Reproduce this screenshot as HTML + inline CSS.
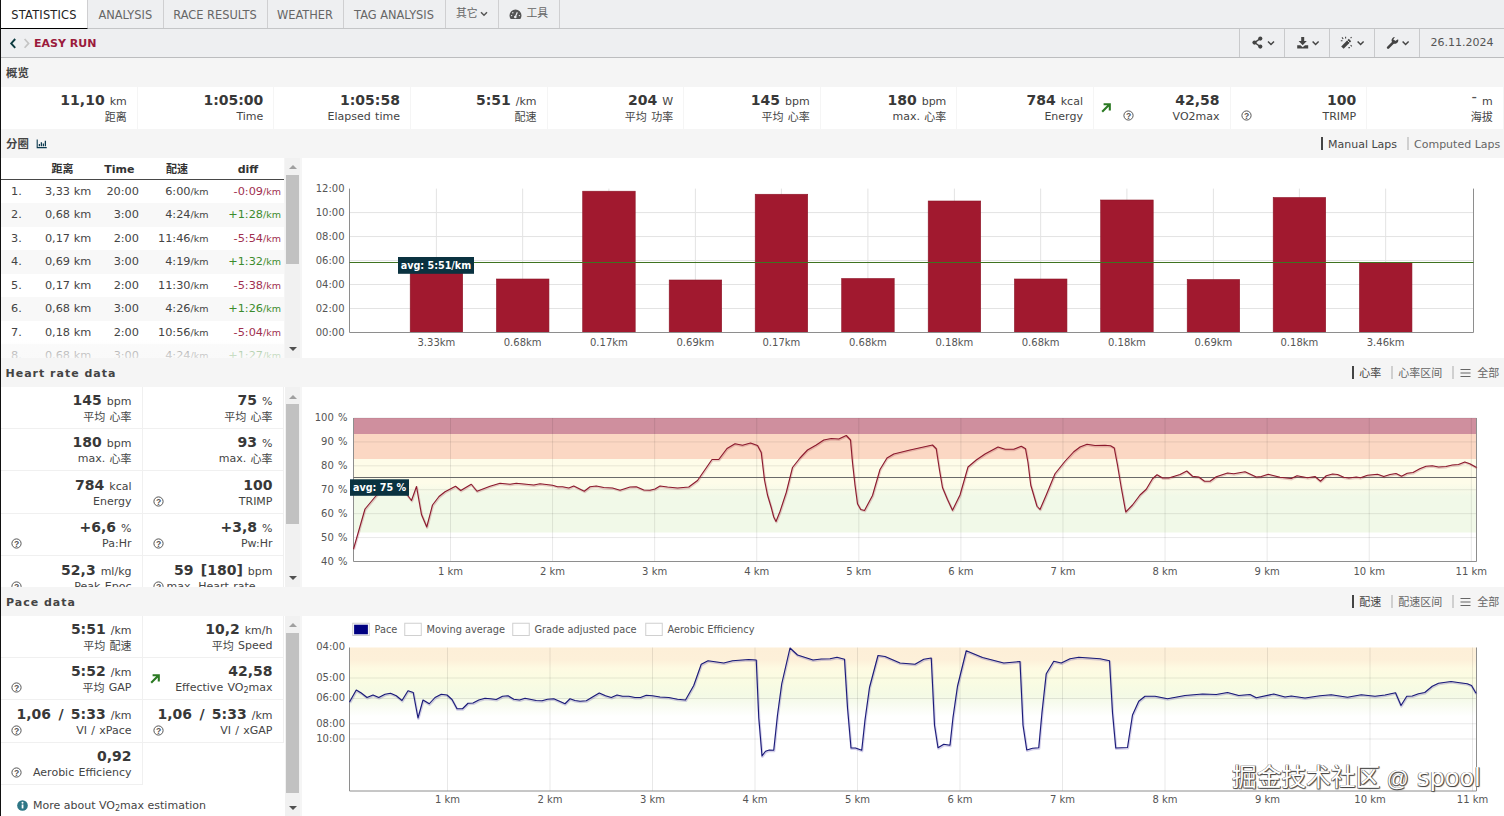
<!DOCTYPE html><html lang="zh"><head><meta charset="utf-8"><title>Easy Run</title><style>
*{box-sizing:border-box;margin:0;padding:0}
html,body{width:1504px;height:816px;overflow:hidden}
body{position:relative;background:#f5f5f5;font-family:"DejaVu Sans","Liberation Sans","Noto Sans CJK SC",sans-serif;font-size:11px;color:#3c3c3c;line-height:1}
.abs{position:absolute}
#lb{left:0;top:0;width:1px;height:816px;background:#111}
#tabs{left:1px;top:0;width:1503px;height:29px;background:#eeeff1;border-bottom:1px solid #c4c5c7}
.tab{position:absolute;top:0;height:28px;border-right:1px solid #cfcfd1;color:#666;font-size:11.4px;line-height:30px;text-align:center;white-space:nowrap}
.tab.act{background:#fff;color:#222;letter-spacing:0.2px;height:29px;border-bottom:1px solid #000;border-right:1px solid #cfcfd1}
#hdr{left:1px;top:29px;width:1503px;height:29px;background:#eeeff1;border-bottom:1px solid #bcbdbf}
.hb{position:absolute;top:0;height:28px;border-left:1px solid #c9cacc}
.st{position:absolute;left:5px;font-weight:bold;color:#444;white-space:nowrap}
.box{position:absolute;background:#fff;text-align:right;white-space:nowrap;padding-right:11px}
.box .v{display:block;font-size:14px;font-weight:bold;color:#383838;height:15px;line-height:15px;word-spacing:2.5px}
.box .v small{font-size:11px;font-weight:normal;color:#444;margin-left:5px}
.box .l{display:block;font-size:11px;color:#444;height:15px;line-height:17px;word-spacing:0.8px}
.cj{position:relative;top:1px}
.hp{position:absolute;width:11px;height:11px}
.panel{position:absolute;background:#fff;overflow:hidden}
.sb{position:absolute;left:285px;width:14.5px;background:#f1f1f1}
.sb i{position:absolute;left:1.3px;width:12.9px;background:#c1c1c1}
.sb b{position:absolute;left:3.5px;width:0;height:0;border-left:4px solid transparent;border-right:4px solid transparent}
.sb b.u{border-bottom:4px solid #a0a0a0}
.sb b.d{border-top:4px solid #505050}
.thead{position:absolute;left:0;top:0;width:283px;height:22px;border-bottom:1px solid #484848;font-weight:bold;color:#333;font-size:11px}
.thead span{position:absolute;top:0;line-height:23.5px}
.tr{position:absolute;left:0;width:283.5px;height:23.46px;font-size:11.3px;color:#444;white-space:nowrap}
.tr.e{background:#f8f8f8}
.tr span{position:absolute;top:0;line-height:23.2px}
.tr small{font-size:9.5px}
.tr .n{color:#a0304f}
.tr .p{color:#3c8b2c}
.lnk{position:absolute;white-space:nowrap;font-size:11px;color:#444}
.lnk.off{color:#666}
.vb{position:absolute;width:2px;height:13px;background:#444}
.vb.off{background:#d0d0d0}
svg text{font-family:"DejaVu Sans","Liberation Sans","Noto Sans CJK SC",sans-serif}
</style></head><body>
<div id="lb" class="abs"></div>
<div id="tabs" class="abs">
<div class="tab act" style="left:0px;width:87px">STATISTICS</div>
<div class="tab" style="left:87px;width:75.5px">ANALYSIS</div>
<div class="tab" style="left:162.5px;width:104px">RACE RESULTS</div>
<div class="tab" style="left:266.5px;width:76px">WEATHER</div>
<div class="tab" style="left:342.5px;width:102px">TAG ANALYSIS</div>
<div class="tab" style="left:444.5px;width:53px;text-align:left;padding-left:10.5px;font-size:10.8px;line-height:28px">其它<svg style="position:absolute;left:34.8px;top:11px" width="8" height="6" viewBox="0 0 8 6"><path d="M1 1.2 L4 4.2 L7 1.2" fill="none" stroke="#555" stroke-width="1.5"/></svg></div>
<div class="tab" style="left:497.5px;width:61px;text-align:left;padding-left:28px;font-size:10.8px;line-height:28px">工具<svg style="position:absolute;left:10.5px;top:8.5px" width="13" height="11" viewBox="0 0 13 11"><path d="M6.5 0.5 A6 6 0 0 0 0.5 6.5 A6 6 0 0 0 1.6 10 L11.4 10 A6 6 0 0 0 12.5 6.5 A6 6 0 0 0 6.5 0.5 Z" fill="#555"/><path d="M6.3 8 L8.3 3.2" stroke="#eeeff1" stroke-width="1.2"/><circle cx="6.3" cy="8" r="1.3" fill="#eeeff1"/><circle cx="2.6" cy="6.6" r="0.7" fill="#eeeff1"/><circle cx="3.8" cy="3.8" r="0.7" fill="#eeeff1"/><circle cx="10.4" cy="6.6" r="0.7" fill="#eeeff1"/></svg></div>
</div>
<div id="hdr" class="abs">
<svg class="abs" style="left:8px;top:8.5px" width="24" height="11" viewBox="0 0 24 11"><path d="M6.2 1 L2.2 5.4 L6.2 9.8" fill="none" stroke="#0d3b40" stroke-width="1.9"/><path d="M15.6 1 L19.6 5.4 L15.6 9.8" fill="none" stroke="#c4c4c4" stroke-width="1.7"/></svg>
<div class="abs" style="left:33px;top:0;line-height:29.5px;font-weight:bold;font-size:11px;color:#9b1b3c;white-space:nowrap">EASY RUN</div>
<div class="hb" style="left:1237.5px;width:45px"><svg width="44" height="28" viewBox="0 0 44 28"><circle cx="20.3" cy="9.6" r="2.1" fill="#444"/><circle cx="14.5" cy="13.6" r="2.1" fill="#444"/><circle cx="20.3" cy="17.6" r="2.1" fill="#444"/><path d="M20.3 9.6 L14.5 13.6 L20.3 17.6" fill="none" stroke="#444" stroke-width="1.3"/><path d="M28 12.5 l3 3 l3 -3" fill="none" stroke="#444" stroke-width="1.5"/></svg></div>
<div class="hb" style="left:1282.5px;width:45px"><svg width="44" height="28" viewBox="0 0 44 28"><path d="M16.2 8 h3 v4 h2.6 l-4.1 4.2 l-4.1 -4.2 h2.6 z" fill="#444"/><path d="M12.2 16.3 h3.2 l2.3 2 l2.3 -2 h3.2 v3.2 h-11 z" fill="#444"/><path d="M27.6 12.5 l3 3 l3 -3" fill="none" stroke="#444" stroke-width="1.5"/></svg></div>
<div class="hb" style="left:1327.5px;width:45px"><svg width="44" height="28" viewBox="0 0 44 28"><path d="M11.2 17.4 L18.8 9.8 L21.2 12.2 L13.6 19.8 Z" fill="#444"/><path d="M17.3 11.3 l2.4 2.4" stroke="#eeeff1" stroke-width="0.9"/><path d="M12 8.4 l1.2 1.6 M15.6 7.8 v1.7 M10.8 11.8 h1.7 M20.6 16.2 l1.2 1.2 M18.4 18.6 h1.5 M21.6 8.2 l-1 1" stroke="#444" stroke-width="1.1"/><path d="M27.6 12.5 l3 3 l3 -3" fill="none" stroke="#444" stroke-width="1.5"/></svg></div>
<div class="hb" style="left:1372.5px;width:45px"><svg width="44" height="28" viewBox="0 0 44 28"><path d="M13.1 18.6 L19.1 12.6" stroke="#444" stroke-width="2.6" stroke-linecap="round"/><path d="M23.1 10.2 a3.4 3.4 0 1 1 -3.2 -2.2 l-1.6 2.4 l1.8 1.6 z" fill="#444"/><path d="M27.6 12.5 l3 3 l3 -3" fill="none" stroke="#444" stroke-width="1.5"/></svg></div>
<div class="hb" style="left:1417.5px;width:85.5px;line-height:28px;padding-left:11px;color:#555;white-space:nowrap">26.11.2024</div>
</div>
<div class="st" style="top:68px;left:6px;font-size:11.4px">概览</div>
<div class="box" style="left:1.15px;top:86.5px;width:135.60px;height:42px;padding-top:6.5px;padding-right:10px"><span class="v">11,10<small>km</small></span><span class="l"><span class="cj">距离</span></span></div>
<div class="box" style="left:137.75px;top:86.5px;width:135.60px;height:42px;padding-top:6.5px;padding-right:10px"><span class="v">1:05:00</span><span class="l">Time</span></div>
<div class="box" style="left:274.35px;top:86.5px;width:135.60px;height:42px;padding-top:6.5px;padding-right:10px"><span class="v">1:05:58</span><span class="l">Elapsed time</span></div>
<div class="box" style="left:410.95px;top:86.5px;width:135.60px;height:42px;padding-top:6.5px;padding-right:10px"><span class="v">5:51<small>/km</small></span><span class="l"><span class="cj">配速</span></span></div>
<div class="box" style="left:547.55px;top:86.5px;width:135.60px;height:42px;padding-top:6.5px;padding-right:10px"><span class="v">204<small>W</small></span><span class="l"><span class="cj">平均</span> <span class="cj">功率</span></span></div>
<div class="box" style="left:684.15px;top:86.5px;width:135.60px;height:42px;padding-top:6.5px;padding-right:10px"><span class="v">145<small>bpm</small></span><span class="l"><span class="cj">平均</span> <span class="cj">心率</span></span></div>
<div class="box" style="left:820.75px;top:86.5px;width:135.60px;height:42px;padding-top:6.5px;padding-right:10px"><span class="v">180<small>bpm</small></span><span class="l">max. <span class="cj">心率</span></span></div>
<div class="box" style="left:957.35px;top:86.5px;width:135.60px;height:42px;padding-top:6.5px;padding-right:10px"><span class="v">784<small>kcal</small></span><span class="l">Energy</span></div>
<div class="box" style="left:1093.95px;top:86.5px;width:135.60px;height:42px;padding-top:6.5px;padding-right:10px"><svg class="abs" style="left:7px;top:16px" width="10" height="10" viewBox="0 0 10 10"><path d="M1.2 8.8 L8.4 1.6 M2.6 1.2 H8.8 V7.4" fill="none" stroke="#2b7a23" stroke-width="2.1"/></svg><svg class="hp" style="left:29px;top:23.5px" viewBox="0 0 11 11"><circle cx="5.5" cy="5.5" r="4.6" fill="none" stroke="#555" stroke-width="1"/><text x="5.6" y="8.5" font-size="8.6" font-weight="bold" text-anchor="middle" fill="#555" style="font-family:&quot;Liberation Sans&quot;,sans-serif">?</text></svg><span class="v">42,58</span><span class="l">VO2max</span></div>
<div class="box" style="left:1230.55px;top:86.5px;width:135.60px;height:42px;padding-top:6.5px;padding-right:10px"><svg class="hp" style="left:10.5px;top:23.5px" viewBox="0 0 11 11"><circle cx="5.5" cy="5.5" r="4.6" fill="none" stroke="#555" stroke-width="1"/><text x="5.6" y="8.5" font-size="8.6" font-weight="bold" text-anchor="middle" fill="#555" style="font-family:&quot;Liberation Sans&quot;,sans-serif">?</text></svg><span class="v">100</span><span class="l">TRIMP</span></div>
<div class="box" style="left:1367.15px;top:86.5px;width:135.60px;height:42px;padding-top:6.5px;padding-right:10px"><span class="v"><span style="font-weight:normal;font-size:15px;color:#555;position:relative;top:-3.5px;line-height:0">-</span><small>m</small></span><span class="l"><span class="cj">海拔</span></span></div>
<div class="st" style="top:139px;left:6px;font-size:11.4px">分圈</div>
<svg class="abs" style="left:35.5px;top:139.3px" width="11.5" height="10" viewBox="0 0 12 11"><path d="M1 0.5 V9.5 H11.5" fill="none" stroke="#0d3b50" stroke-width="1.2"/><path d="M3.4 8 V5.5 M5.6 8 V3.5 M7.8 8 V5 M10 8 V2" stroke="#0d3b50" stroke-width="1.4"/></svg>
<div class="vb" style="left:1320.8px;top:137px"></div><div class="lnk" style="left:1328px;top:138.5px">Manual Laps</div>
<div class="vb off" style="left:1406.5px;top:137px"></div><div class="lnk off" style="left:1414px;top:138.5px">Computed Laps</div>
<div class="panel" style="left:1px;top:158px;width:283px;height:199.5px">
<div class="thead"><span style="left:37px;width:49px;text-align:center">距离</span><span style="left:99px;width:38.5px;text-align:center">Time</span><span style="left:150px;width:52px;text-align:center">配速</span><span style="left:222px;width:50px;text-align:center">diff</span></div>
<div class="tr" style="top:22.00px"><span style="left:10px">1.</span><span style="right:193.3px">3,33 km</span><span style="right:145.5px">20:00</span><span style="right:76px">6:00<small>/km</small></span><span class="n" style="right:3.5px">-0:09<small>/km</small></span></div>
<div class="tr e" style="top:45.46px"><span style="left:10px">2.</span><span style="right:193.3px">0,68 km</span><span style="right:145.5px">3:00</span><span style="right:76px">4:24<small>/km</small></span><span class="p" style="right:3.5px">+1:28<small>/km</small></span></div>
<div class="tr" style="top:68.92px"><span style="left:10px">3.</span><span style="right:193.3px">0,17 km</span><span style="right:145.5px">2:00</span><span style="right:76px">11:46<small>/km</small></span><span class="n" style="right:3.5px">-5:54<small>/km</small></span></div>
<div class="tr e" style="top:92.38px"><span style="left:10px">4.</span><span style="right:193.3px">0,69 km</span><span style="right:145.5px">3:00</span><span style="right:76px">4:19<small>/km</small></span><span class="p" style="right:3.5px">+1:32<small>/km</small></span></div>
<div class="tr" style="top:115.84px"><span style="left:10px">5.</span><span style="right:193.3px">0,17 km</span><span style="right:145.5px">2:00</span><span style="right:76px">11:30<small>/km</small></span><span class="n" style="right:3.5px">-5:38<small>/km</small></span></div>
<div class="tr e" style="top:139.30px"><span style="left:10px">6.</span><span style="right:193.3px">0,68 km</span><span style="right:145.5px">3:00</span><span style="right:76px">4:26<small>/km</small></span><span class="p" style="right:3.5px">+1:26<small>/km</small></span></div>
<div class="tr" style="top:162.76px"><span style="left:10px">7.</span><span style="right:193.3px">0,18 km</span><span style="right:145.5px">2:00</span><span style="right:76px">10:56<small>/km</small></span><span class="n" style="right:3.5px">-5:04<small>/km</small></span></div>
<div class="tr e" style="top:186.22px"><span style="left:10px">8.</span><span style="right:193.3px">0,68 km</span><span style="right:145.5px">3:00</span><span style="right:76px">4:24<small>/km</small></span><span class="p" style="right:3.5px">+1:27<small>/km</small></span></div>
<div class="abs" style="left:0;top:182px;width:284px;height:18px;background:linear-gradient(rgba(255,255,255,.35),rgba(250,250,250,.8))"></div>
</div>
<div class="sb" style="top:158px;height:199.5px"><b class="u" style="top:6.5px"></b><i style="top:17px;height:89px"></i><b class="d" style="top:189px"></b></div>
<div class="panel" style="left:302px;top:158px;width:1202px;height:199.5px">
<svg width="1202" height="199.5" viewBox="302 158 1202 199.5">
<g stroke="#e3e3e3" stroke-width="1"><line x1="349.5" y1="308.52" x2="1473.5" y2="308.52"/><line x1="349.5" y1="284.53" x2="1473.5" y2="284.53"/><line x1="349.5" y1="260.55" x2="1473.5" y2="260.55"/><line x1="349.5" y1="236.57" x2="1473.5" y2="236.57"/><line x1="349.5" y1="212.58" x2="1473.5" y2="212.58"/><line x1="436.40" y1="188.6" x2="436.40" y2="332.5"/><line x1="522.65" y1="188.6" x2="522.65" y2="332.5"/><line x1="608.90" y1="188.6" x2="608.90" y2="332.5"/><line x1="695.40" y1="188.6" x2="695.40" y2="332.5"/><line x1="781.40" y1="188.6" x2="781.40" y2="332.5"/><line x1="867.90" y1="188.6" x2="867.90" y2="332.5"/><line x1="954.40" y1="188.6" x2="954.40" y2="332.5"/><line x1="1040.65" y1="188.6" x2="1040.65" y2="332.5"/><line x1="1126.90" y1="188.6" x2="1126.90" y2="332.5"/><line x1="1213.40" y1="188.6" x2="1213.40" y2="332.5"/><line x1="1299.40" y1="188.6" x2="1299.40" y2="332.5"/><line x1="1385.65" y1="188.6" x2="1385.65" y2="332.5"/></g>
<g fill="#a1192f" stroke="#8c1427" stroke-width="0.6">
<rect x="410.20" y="260.50" width="52.5" height="72.00"/>
<rect x="496.45" y="279.00" width="52.5" height="53.50"/>
<rect x="582.70" y="191.20" width="52.5" height="141.30"/>
<rect x="669.20" y="280.00" width="52.5" height="52.50"/>
<rect x="755.20" y="194.25" width="52.5" height="138.25"/>
<rect x="841.70" y="278.50" width="52.5" height="54.00"/>
<rect x="928.20" y="201.00" width="52.5" height="131.50"/>
<rect x="1014.45" y="279.00" width="52.5" height="53.50"/>
<rect x="1100.70" y="200.00" width="52.5" height="132.50"/>
<rect x="1187.20" y="279.50" width="52.5" height="53.00"/>
<rect x="1273.20" y="197.50" width="52.5" height="135.00"/>
<rect x="1359.45" y="262.50" width="52.5" height="70.00"/>
</g>
<path d="M349.5 188.6 V332.5 H1473.5 V188.6" fill="none" stroke="#8e8e8e" stroke-width="1"/>
<line x1="349.5" y1="262.5" x2="1473.5" y2="262.5" stroke="#3f7320" stroke-width="1"/>
<rect x="398" y="257" width="76" height="16.8" fill="#0a3240"/>
<text x="436" y="269" font-size="9.6" font-weight="bold" fill="#fff" text-anchor="middle">avg: 5:51/km</text>
<g font-size="10" fill="#555" text-anchor="end">
<text x="344.5" y="335.90">00:00</text>
<text x="344.5" y="311.92">02:00</text>
<text x="344.5" y="287.93">04:00</text>
<text x="344.5" y="263.95">06:00</text>
<text x="344.5" y="239.97">08:00</text>
<text x="344.5" y="215.98">10:00</text>
<text x="344.5" y="192.00">12:00</text>
</g><g font-size="10" fill="#555" text-anchor="middle">
<text x="436.40" y="345.8">3.33km</text>
<text x="522.65" y="345.8">0.68km</text>
<text x="608.90" y="345.8">0.17km</text>
<text x="695.40" y="345.8">0.69km</text>
<text x="781.40" y="345.8">0.17km</text>
<text x="867.90" y="345.8">0.68km</text>
<text x="954.40" y="345.8">0.18km</text>
<text x="1040.65" y="345.8">0.68km</text>
<text x="1126.90" y="345.8">0.18km</text>
<text x="1213.40" y="345.8">0.69km</text>
<text x="1299.40" y="345.8">0.18km</text>
<text x="1385.65" y="345.8">3.46km</text>
</g></svg></div>
<div class="st" style="top:367.5px;left:5.5px;font-size:11px;letter-spacing:1px">Heart rate data</div>
<div class="vb" style="left:1351.5px;top:366px"></div><div class="lnk" style="left:1359.2px;top:368.2px">心率</div>
<div class="vb off" style="left:1390.5px;top:366px"></div><div class="lnk off" style="left:1398.3px;top:368.2px">心率区间</div>
<div class="vb off" style="left:1451.5px;top:366px"></div>
<svg class="abs" style="left:1460px;top:368.3px" width="11" height="10" viewBox="0 0 11 10"><path d="M0.5 1.5 H10.5 M0.5 5 H10.5 M0.5 8.5 H10.5" stroke="#666" stroke-width="1.1"/></svg>
<div class="lnk off" style="left:1477.3px;top:368.2px">全部</div>
<div class="panel" style="left:1px;top:386.5px;width:283.5px;height:200.5px">
<div class="box" style="left:0.0px;top:0.0px;width:141.5px;height:42.5px;padding-top:6.5px;border-right:1px solid #f0f0f0;border-bottom:1px solid #f0f0f0;padding-right:10px"><span class="v">145<small>bpm</small></span><span class="l"><span class="cj">平均</span> <span class="cj">心率</span></span></div>
<div class="box" style="left:141.5px;top:0.0px;width:141.5px;height:42.5px;padding-top:6.5px;border-right:1px solid #f0f0f0;border-bottom:1px solid #f0f0f0;padding-right:10.5px"><span class="v">75<small>%</small></span><span class="l"><span class="cj">平均</span> <span class="cj">心率</span></span></div>
<div class="box" style="left:0.0px;top:42.4px;width:141.5px;height:42.5px;padding-top:6.5px;border-right:1px solid #f0f0f0;border-bottom:1px solid #f0f0f0;padding-right:10px"><span class="v">180<small>bpm</small></span><span class="l">max. <span class="cj">心率</span></span></div>
<div class="box" style="left:141.5px;top:42.4px;width:141.5px;height:42.5px;padding-top:6.5px;border-right:1px solid #f0f0f0;border-bottom:1px solid #f0f0f0;padding-right:10.5px"><span class="v">93<small>%</small></span><span class="l">max. <span class="cj">心率</span></span></div>
<div class="box" style="left:0.0px;top:84.8px;width:141.5px;height:42.5px;padding-top:6.5px;border-right:1px solid #f0f0f0;border-bottom:1px solid #f0f0f0;padding-right:10px"><span class="v">784<small>kcal</small></span><span class="l">Energy</span></div>
<div class="box" style="left:141.5px;top:84.8px;width:141.5px;height:42.5px;padding-top:6.5px;border-right:1px solid #f0f0f0;border-bottom:1px solid #f0f0f0;padding-right:10.5px"><svg class="hp" style="left:10px;top:24.5px" viewBox="0 0 11 11"><circle cx="5.5" cy="5.5" r="4.6" fill="none" stroke="#555" stroke-width="1"/><text x="5.6" y="8.5" font-size="8.6" font-weight="bold" text-anchor="middle" fill="#555" style="font-family:&quot;Liberation Sans&quot;,sans-serif">?</text></svg><span class="v">100</span><span class="l">TRIMP</span></div>
<div class="box" style="left:0.0px;top:127.19999999999999px;width:141.5px;height:42.5px;padding-top:6.5px;border-right:1px solid #f0f0f0;border-bottom:1px solid #f0f0f0;padding-right:10px"><svg class="hp" style="left:10px;top:24.5px" viewBox="0 0 11 11"><circle cx="5.5" cy="5.5" r="4.6" fill="none" stroke="#555" stroke-width="1"/><text x="5.6" y="8.5" font-size="8.6" font-weight="bold" text-anchor="middle" fill="#555" style="font-family:&quot;Liberation Sans&quot;,sans-serif">?</text></svg><span class="v">+6,6<small>%</small></span><span class="l">Pa:Hr</span></div>
<div class="box" style="left:141.5px;top:127.19999999999999px;width:141.5px;height:42.5px;padding-top:6.5px;border-right:1px solid #f0f0f0;border-bottom:1px solid #f0f0f0;padding-right:10.5px"><svg class="hp" style="left:10px;top:24.5px" viewBox="0 0 11 11"><circle cx="5.5" cy="5.5" r="4.6" fill="none" stroke="#555" stroke-width="1"/><text x="5.6" y="8.5" font-size="8.6" font-weight="bold" text-anchor="middle" fill="#555" style="font-family:&quot;Liberation Sans&quot;,sans-serif">?</text></svg><span class="v">+3,8<small>%</small></span><span class="l">Pw:Hr</span></div>
<div class="box" style="left:0.0px;top:169.6px;width:141.5px;height:42.5px;padding-top:6.5px;border-right:1px solid #f0f0f0;border-bottom:1px solid #f0f0f0;padding-right:10px"><svg class="hp" style="left:10px;top:24.5px" viewBox="0 0 11 11"><circle cx="5.5" cy="5.5" r="4.6" fill="none" stroke="#555" stroke-width="1"/><text x="5.6" y="8.5" font-size="8.6" font-weight="bold" text-anchor="middle" fill="#555" style="font-family:&quot;Liberation Sans&quot;,sans-serif">?</text></svg><span class="v">52,3<small>ml/kg</small></span><span class="l">Peak Epoc</span></div>
<div class="box" style="left:141.5px;top:169.6px;width:141.5px;height:42.5px;padding-top:6.5px;border-right:1px solid #f0f0f0;border-bottom:1px solid #f0f0f0;padding-right:10.5px"><span class="v">59 [180]<small>bpm</small></span><span class="l" style="padding-right:17px">max. Heart rate</span><svg class="hp" style="left:10px;top:24.5px" viewBox="0 0 11 11"><circle cx="5.5" cy="5.5" r="4.6" fill="none" stroke="#555" stroke-width="1"/><text x="5.6" y="8.5" font-size="8.6" font-weight="bold" text-anchor="middle" fill="#555" style="font-family:&quot;Liberation Sans&quot;,sans-serif">?</text></svg></div>
</div>
<div class="sb" style="top:386.5px;height:200.5px"><b class="u" style="top:8px"></b><i style="top:17.5px;height:120px"></i><b class="d" style="top:189px"></b></div>
<div class="panel" style="left:302px;top:387px;width:1202px;height:200px">
<svg width="1202" height="200" viewBox="302 387 1202 200">
<rect x="353.5" y="418" width="1123.0" height="16" fill="#cf8f9e"/>
<rect x="353.5" y="434" width="1123.0" height="25" fill="#fbd7c3"/>
<rect x="353.5" y="459" width="1123.0" height="24.2" fill="#fefce9"/>
<defs><linearGradient id="hg" x1="0" y1="0" x2="0" y2="1"><stop offset="0" stop-color="#fefce9"/><stop offset="1" stop-color="#f1f9e8"/></linearGradient></defs>
<rect x="353.5" y="483" width="1123.0" height="13.2" fill="url(#hg)"/>
<rect x="353.5" y="496" width="1123.0" height="36.5" fill="#f1f9e8"/>
<g stroke="rgba(0,0,0,0.09)" stroke-width="1"><line x1="353.5" y1="561.50" x2="1476.5" y2="561.50"/><line x1="353.5" y1="537.58" x2="1476.5" y2="537.58"/><line x1="353.5" y1="513.67" x2="1476.5" y2="513.67"/><line x1="353.5" y1="489.75" x2="1476.5" y2="489.75"/><line x1="353.5" y1="465.83" x2="1476.5" y2="465.83"/><line x1="353.5" y1="441.92" x2="1476.5" y2="441.92"/><line x1="353.5" y1="418.00" x2="1476.5" y2="418.00"/><line x1="450.50" y1="418" x2="450.50" y2="561.5"/><line x1="552.58" y1="418" x2="552.58" y2="561.5"/><line x1="654.66" y1="418" x2="654.66" y2="561.5"/><line x1="756.74" y1="418" x2="756.74" y2="561.5"/><line x1="858.82" y1="418" x2="858.82" y2="561.5"/><line x1="960.90" y1="418" x2="960.90" y2="561.5"/><line x1="1062.98" y1="418" x2="1062.98" y2="561.5"/><line x1="1165.06" y1="418" x2="1165.06" y2="561.5"/><line x1="1267.14" y1="418" x2="1267.14" y2="561.5"/><line x1="1369.22" y1="418" x2="1369.22" y2="561.5"/><line x1="1471.30" y1="418" x2="1471.30" y2="561.5"/></g>
<path d="M353.5 418 V561.5 H1476.5 V418" fill="none" stroke="#8e8e8e" stroke-width="1"/>
<line x1="353.5" y1="477.5" x2="1476.5" y2="477.5" stroke="#6a6a6a" stroke-width="1"/>
<path d="M353.50 549.00 L365.00 509.00 L375.00 497.00 L383.00 488.00 L395.00 487.00 L405.00 492.00 L411.50 500.50 L416.50 486.50 L421.50 514.50 L426.75 527.00 L432.50 505.00 L439.00 496.50 L445.00 491.75 L455.50 486.25 L460.75 490.50 L471.25 484.25 L477.00 491.25 L490.00 486.25 L500.00 483.25 L510.00 484.25 L516.25 483.25 L533.75 485.00 L540.00 483.75 L552.50 485.25 L557.50 486.75 L562.50 486.75 L568.75 488.00 L573.75 486.00 L584.25 491.25 L590.00 486.75 L596.25 486.00 L603.75 487.50 L612.50 488.00 L620.00 490.25 L630.00 487.00 L636.25 486.75 L643.75 490.00 L650.00 490.25 L655.00 489.00 L660.00 486.00 L667.50 487.00 L677.50 488.00 L688.75 487.00 L697.50 480.50 L712.00 459.50 L718.75 459.50 L727.00 448.50 L735.00 443.75 L742.50 445.25 L750.50 443.00 L757.50 445.50 L761.25 452.50 L764.50 480.00 L767.50 495.00 L771.25 507.50 L773.75 517.00 L776.00 521.50 L780.00 511.50 L786.25 492.50 L792.50 467.50 L800.00 458.00 L807.50 450.00 L816.25 445.00 L823.75 440.00 L831.25 438.50 L838.75 439.00 L846.25 435.50 L850.50 440.00 L852.50 462.50 L855.00 485.00 L857.50 503.75 L860.75 509.50 L864.50 510.50 L872.50 495.50 L880.00 469.50 L887.00 458.00 L893.75 454.00 L910.00 450.00 L932.50 445.00 L936.25 448.75 L939.50 470.00 L942.50 487.50 L947.50 499.50 L952.50 510.25 L960.00 495.00 L968.00 467.00 L976.25 460.00 L985.00 454.00 L998.00 447.00 L1005.00 449.25 L1013.75 449.25 L1021.25 446.25 L1025.50 448.75 L1028.00 462.50 L1030.75 485.00 L1037.00 506.25 L1040.00 509.50 L1046.25 495.00 L1055.00 473.75 L1065.00 461.25 L1073.75 451.75 L1080.00 447.00 L1087.00 444.25 L1095.00 445.50 L1105.00 445.25 L1110.50 445.75 L1114.25 448.00 L1117.50 465.00 L1121.25 487.50 L1125.75 512.00 L1132.50 505.00 L1140.00 495.00 L1146.25 489.25 L1152.50 478.75 L1157.00 474.75 L1162.50 478.00 L1168.75 478.00 L1180.00 474.50 L1186.75 471.00 L1192.50 476.25 L1198.75 477.00 L1204.50 481.25 L1210.00 481.25 L1216.25 476.75 L1227.50 473.00 L1233.75 473.75 L1245.00 471.75 L1256.25 477.00 L1261.25 476.50 L1268.25 474.25 L1280.00 477.25 L1291.25 478.50 L1297.00 475.75 L1307.50 477.75 L1315.00 476.50 L1320.50 481.25 L1326.25 475.75 L1332.50 474.00 L1337.50 474.50 L1343.75 477.25 L1348.75 478.00 L1356.25 477.00 L1360.50 477.75 L1367.50 475.25 L1377.50 474.25 L1383.75 476.50 L1390.00 474.50 L1396.00 473.50 L1401.50 476.25 L1407.25 473.25 L1413.00 472.50 L1419.75 468.75 L1426.00 466.25 L1432.25 465.75 L1438.50 467.00 L1446.00 466.50 L1452.25 465.00 L1458.50 464.50 L1464.75 462.00 L1469.75 463.75 L1476.50 467.50" fill="none" stroke="rgba(140,20,40,0.2)" stroke-width="2.2" stroke-linejoin="round" transform="translate(0.5,0.8)"/>
<path d="M353.50 549.00 L365.00 509.00 L375.00 497.00 L383.00 488.00 L395.00 487.00 L405.00 492.00 L411.50 500.50 L416.50 486.50 L421.50 514.50 L426.75 527.00 L432.50 505.00 L439.00 496.50 L445.00 491.75 L455.50 486.25 L460.75 490.50 L471.25 484.25 L477.00 491.25 L490.00 486.25 L500.00 483.25 L510.00 484.25 L516.25 483.25 L533.75 485.00 L540.00 483.75 L552.50 485.25 L557.50 486.75 L562.50 486.75 L568.75 488.00 L573.75 486.00 L584.25 491.25 L590.00 486.75 L596.25 486.00 L603.75 487.50 L612.50 488.00 L620.00 490.25 L630.00 487.00 L636.25 486.75 L643.75 490.00 L650.00 490.25 L655.00 489.00 L660.00 486.00 L667.50 487.00 L677.50 488.00 L688.75 487.00 L697.50 480.50 L712.00 459.50 L718.75 459.50 L727.00 448.50 L735.00 443.75 L742.50 445.25 L750.50 443.00 L757.50 445.50 L761.25 452.50 L764.50 480.00 L767.50 495.00 L771.25 507.50 L773.75 517.00 L776.00 521.50 L780.00 511.50 L786.25 492.50 L792.50 467.50 L800.00 458.00 L807.50 450.00 L816.25 445.00 L823.75 440.00 L831.25 438.50 L838.75 439.00 L846.25 435.50 L850.50 440.00 L852.50 462.50 L855.00 485.00 L857.50 503.75 L860.75 509.50 L864.50 510.50 L872.50 495.50 L880.00 469.50 L887.00 458.00 L893.75 454.00 L910.00 450.00 L932.50 445.00 L936.25 448.75 L939.50 470.00 L942.50 487.50 L947.50 499.50 L952.50 510.25 L960.00 495.00 L968.00 467.00 L976.25 460.00 L985.00 454.00 L998.00 447.00 L1005.00 449.25 L1013.75 449.25 L1021.25 446.25 L1025.50 448.75 L1028.00 462.50 L1030.75 485.00 L1037.00 506.25 L1040.00 509.50 L1046.25 495.00 L1055.00 473.75 L1065.00 461.25 L1073.75 451.75 L1080.00 447.00 L1087.00 444.25 L1095.00 445.50 L1105.00 445.25 L1110.50 445.75 L1114.25 448.00 L1117.50 465.00 L1121.25 487.50 L1125.75 512.00 L1132.50 505.00 L1140.00 495.00 L1146.25 489.25 L1152.50 478.75 L1157.00 474.75 L1162.50 478.00 L1168.75 478.00 L1180.00 474.50 L1186.75 471.00 L1192.50 476.25 L1198.75 477.00 L1204.50 481.25 L1210.00 481.25 L1216.25 476.75 L1227.50 473.00 L1233.75 473.75 L1245.00 471.75 L1256.25 477.00 L1261.25 476.50 L1268.25 474.25 L1280.00 477.25 L1291.25 478.50 L1297.00 475.75 L1307.50 477.75 L1315.00 476.50 L1320.50 481.25 L1326.25 475.75 L1332.50 474.00 L1337.50 474.50 L1343.75 477.25 L1348.75 478.00 L1356.25 477.00 L1360.50 477.75 L1367.50 475.25 L1377.50 474.25 L1383.75 476.50 L1390.00 474.50 L1396.00 473.50 L1401.50 476.25 L1407.25 473.25 L1413.00 472.50 L1419.75 468.75 L1426.00 466.25 L1432.25 465.75 L1438.50 467.00 L1446.00 466.50 L1452.25 465.00 L1458.50 464.50 L1464.75 462.00 L1469.75 463.75 L1476.50 467.50" fill="none" stroke="#8c1a2e" stroke-width="1.1" stroke-linejoin="round"/>
<rect x="350" y="479.3" width="59" height="16.5" fill="#0a3240"/>
<text x="379.5" y="491.2" font-size="9.6" font-weight="bold" fill="#fff" text-anchor="middle">avg: 75 %</text>
<g font-size="10" fill="#555" text-anchor="end">
<text x="347.5" y="564.90" style="word-spacing:1px">40 %</text>
<text x="347.5" y="540.98" style="word-spacing:1px">50 %</text>
<text x="347.5" y="517.07" style="word-spacing:1px">60 %</text>
<text x="347.5" y="493.15" style="word-spacing:1px">70 %</text>
<text x="347.5" y="469.23" style="word-spacing:1px">80 %</text>
<text x="347.5" y="445.32" style="word-spacing:1px">90 %</text>
<text x="347.5" y="421.40" style="word-spacing:1px">100 %</text>
</g><g font-size="10" fill="#555" text-anchor="middle">
<text x="450.50" y="574.5">1 km</text>
<text x="552.58" y="574.5">2 km</text>
<text x="654.66" y="574.5">3 km</text>
<text x="756.74" y="574.5">4 km</text>
<text x="858.82" y="574.5">5 km</text>
<text x="960.90" y="574.5">6 km</text>
<text x="1062.98" y="574.5">7 km</text>
<text x="1165.06" y="574.5">8 km</text>
<text x="1267.14" y="574.5">9 km</text>
<text x="1369.22" y="574.5">10 km</text>
<text x="1471.30" y="574.5">11 km</text>
</g></svg></div>
<div class="st" style="top:596.5px;left:6px;font-size:11px;letter-spacing:1px">Pace data</div>
<div class="vb" style="left:1351.5px;top:595px"></div><div class="lnk" style="left:1359.2px;top:597.2px">配速</div>
<div class="vb off" style="left:1390.5px;top:595px"></div><div class="lnk off" style="left:1398.3px;top:597.2px">配速区间</div>
<div class="vb off" style="left:1451.5px;top:595px"></div>
<svg class="abs" style="left:1460px;top:597.3px" width="11" height="10" viewBox="0 0 11 10"><path d="M0.5 1.5 H10.5 M0.5 5 H10.5 M0.5 8.5 H10.5" stroke="#666" stroke-width="1.1"/></svg>
<div class="lnk off" style="left:1477.3px;top:597.2px">全部</div>
<div class="panel" style="left:1px;top:615.5px;width:283.5px;height:200.5px">
<div class="box" style="left:0.0px;top:0.0px;width:141.5px;height:42.5px;padding-top:6.5px;border-right:1px solid #f0f0f0;border-bottom:1px solid #f0f0f0;padding-right:10px"><span class="v">5:51<small>/km</small></span><span class="l"><span class="cj">平均</span> <span class="cj">配速</span></span></div>
<div class="box" style="left:141.5px;top:0.0px;width:141.5px;height:42.5px;padding-top:6.5px;border-right:1px solid #f0f0f0;border-bottom:1px solid #f0f0f0;padding-right:10.5px"><span class="v">10,2<small>km/h</small></span><span class="l"><span class="cj">平均</span> Speed</span></div>
<div class="box" style="left:0.0px;top:42.4px;width:141.5px;height:42.5px;padding-top:6.5px;border-right:1px solid #f0f0f0;border-bottom:1px solid #f0f0f0;padding-right:10px"><svg class="hp" style="left:10px;top:24.5px" viewBox="0 0 11 11"><circle cx="5.5" cy="5.5" r="4.6" fill="none" stroke="#555" stroke-width="1"/><text x="5.6" y="8.5" font-size="8.6" font-weight="bold" text-anchor="middle" fill="#555" style="font-family:&quot;Liberation Sans&quot;,sans-serif">?</text></svg><span class="v">5:52<small>/km</small></span><span class="l"><span class="cj">平均</span> GAP</span></div>
<div class="box" style="left:141.5px;top:42.4px;width:141.5px;height:42.5px;padding-top:6.5px;border-right:1px solid #f0f0f0;border-bottom:1px solid #f0f0f0;padding-right:10.5px"><svg class="abs" style="left:7.2px;top:16px" width="10" height="10" viewBox="0 0 10 10"><path d="M1.2 8.8 L8.4 1.6 M2.6 1.2 H8.8 V7.4" fill="none" stroke="#2b7a23" stroke-width="2.1"/></svg><span class="v">42,58</span><span class="l">Effective VO<sub style="font-size:8px;vertical-align:-2px;line-height:0">2</sub>max</span></div>
<div class="box" style="left:0.0px;top:84.8px;width:141.5px;height:42.5px;padding-top:6.5px;border-right:1px solid #f0f0f0;border-bottom:1px solid #f0f0f0;padding-right:10px"><svg class="hp" style="left:10px;top:24.5px" viewBox="0 0 11 11"><circle cx="5.5" cy="5.5" r="4.6" fill="none" stroke="#555" stroke-width="1"/><text x="5.6" y="8.5" font-size="8.6" font-weight="bold" text-anchor="middle" fill="#555" style="font-family:&quot;Liberation Sans&quot;,sans-serif">?</text></svg><span class="v">1,06 / 5:33<small>/km</small></span><span class="l">VI / xPace</span></div>
<div class="box" style="left:141.5px;top:84.8px;width:141.5px;height:42.5px;padding-top:6.5px;border-right:1px solid #f0f0f0;border-bottom:1px solid #f0f0f0;padding-right:10.5px"><svg class="hp" style="left:10px;top:24.5px" viewBox="0 0 11 11"><circle cx="5.5" cy="5.5" r="4.6" fill="none" stroke="#555" stroke-width="1"/><text x="5.6" y="8.5" font-size="8.6" font-weight="bold" text-anchor="middle" fill="#555" style="font-family:&quot;Liberation Sans&quot;,sans-serif">?</text></svg><span class="v">1,06 / 5:33<small>/km</small></span><span class="l">VI / xGAP</span></div>
<div class="box" style="left:0.0px;top:127.19999999999999px;width:141.5px;height:42.5px;padding-top:6.5px;border-right:1px solid #f0f0f0;border-bottom:1px solid #f0f0f0;padding-right:10px"><svg class="hp" style="left:10px;top:24.5px" viewBox="0 0 11 11"><circle cx="5.5" cy="5.5" r="4.6" fill="none" stroke="#555" stroke-width="1"/><text x="5.6" y="8.5" font-size="8.6" font-weight="bold" text-anchor="middle" fill="#555" style="font-family:&quot;Liberation Sans&quot;,sans-serif">?</text></svg><span class="v">0,92</span><span class="l">Aerobic Efficiency</span></div>
<svg class="abs" style="left:15.5px;top:184px" width="11" height="11" viewBox="0 0 12 12"><circle cx="6" cy="6" r="5.8" fill="#2e7685"/><rect x="5.1" y="4.9" width="1.9" height="4.3" fill="#fff"/><circle cx="6" cy="3.1" r="1.1" fill="#fff"/></svg>
<div class="abs" style="left:32px;top:184.3px;font-size:11px;color:#444;white-space:nowrap">More about VO<sub style="font-size:8px;vertical-align:-2px;line-height:0">2</sub>max estimation</div>
</div>
<div class="sb" style="top:615.5px;height:200.5px"><b class="u" style="top:7.5px"></b><i style="top:17.5px;height:160px"></i><b class="d" style="top:190px"></b></div>
<div class="panel" style="left:302px;top:615.5px;width:1202px;height:200.5px">
<svg width="1202" height="200.5" viewBox="302 615.5 1202 200.5">
<defs><linearGradient id="pg" x1="0" y1="0" x2="0" y2="1"><stop offset="0" stop-color="#fdefd8"/><stop offset="0.18" stop-color="#fdf0d9"/><stop offset="0.30" stop-color="#fefae2"/><stop offset="0.44" stop-color="#fbfce2"/><stop offset="0.70" stop-color="#f4fae5"/><stop offset="0.80" stop-color="#f7fbee"/><stop offset="1" stop-color="#ffffff"/></linearGradient></defs>
<rect x="349.5" y="647" width="1127.0" height="69" fill="url(#pg)"/>
<g stroke="rgba(0,0,0,0.09)" stroke-width="1"><line x1="349.5" y1="677.50" x2="1476.5" y2="677.50"/><line x1="349.5" y1="698.00" x2="1476.5" y2="698.00"/><line x1="349.5" y1="723.25" x2="1476.5" y2="723.25"/><line x1="349.5" y1="738.50" x2="1476.5" y2="738.50"/><line x1="447.50" y1="647" x2="447.50" y2="790.5"/><line x1="550.00" y1="647" x2="550.00" y2="790.5"/><line x1="652.50" y1="647" x2="652.50" y2="790.5"/><line x1="755.00" y1="647" x2="755.00" y2="790.5"/><line x1="857.50" y1="647" x2="857.50" y2="790.5"/><line x1="960.00" y1="647" x2="960.00" y2="790.5"/><line x1="1062.50" y1="647" x2="1062.50" y2="790.5"/><line x1="1165.00" y1="647" x2="1165.00" y2="790.5"/><line x1="1267.50" y1="647" x2="1267.50" y2="790.5"/><line x1="1370.00" y1="647" x2="1370.00" y2="790.5"/><line x1="1472.50" y1="647" x2="1472.50" y2="790.5"/></g>
<path d="M349.5 647 V790.5 H1476.5 V647" fill="none" stroke="#8e8e8e" stroke-width="1"/>
<path d="M349.50 701.50 L356.25 689.50 L361.25 692.50 L367.00 697.00 L373.00 694.50 L378.75 697.00 L385.00 693.75 L390.50 692.75 L396.25 695.25 L402.00 700.00 L408.00 690.25 L413.25 692.00 L418.00 717.50 L423.00 699.50 L429.25 703.25 L435.00 697.00 L441.25 693.75 L447.00 694.50 L452.00 699.00 L457.00 708.25 L462.50 708.25 L468.00 702.75 L473.00 702.50 L478.75 699.50 L485.00 697.75 L490.50 698.25 L496.25 699.00 L502.50 695.75 L508.00 695.25 L513.75 698.75 L519.50 699.50 L525.00 697.75 L531.25 699.00 L536.25 700.00 L542.00 700.25 L547.50 698.75 L553.75 698.25 L559.50 700.75 L565.00 703.25 L570.00 698.25 L575.00 700.00 L580.00 700.75 L586.25 700.25 L592.50 696.50 L599.25 692.50 L605.50 695.25 L611.25 697.00 L617.00 694.50 L622.50 695.75 L628.75 695.75 L635.00 697.00 L640.50 697.00 L646.25 694.75 L652.50 695.25 L660.00 696.50 L668.75 697.00 L677.50 698.75 L685.50 699.50 L693.75 685.00 L701.25 663.75 L708.00 660.25 L723.75 662.50 L732.50 660.25 L748.75 659.00 L756.25 659.50 L758.75 717.00 L762.00 755.50 L765.50 750.75 L769.25 749.50 L773.75 749.75 L777.50 714.50 L781.75 683.25 L790.00 647.50 L797.50 654.50 L813.00 659.50 L821.25 658.50 L830.00 658.25 L837.00 656.75 L844.50 658.75 L847.50 707.00 L851.00 747.50 L855.50 747.50 L861.75 749.75 L865.00 719.50 L869.50 687.00 L878.00 655.00 L885.00 656.00 L900.00 662.50 L915.00 663.75 L923.75 658.75 L931.25 657.50 L934.50 724.50 L938.00 747.25 L943.75 743.75 L950.00 744.75 L953.00 717.00 L957.50 685.75 L966.25 650.25 L982.50 657.00 L1003.75 662.50 L1020.00 661.00 L1023.00 724.50 L1026.75 749.50 L1032.50 747.75 L1038.75 747.25 L1042.00 712.00 L1046.25 673.25 L1053.75 660.75 L1061.25 662.50 L1070.00 658.25 L1078.75 656.75 L1100.00 658.25 L1109.50 660.25 L1112.50 712.00 L1115.75 747.50 L1127.50 747.00 L1132.50 714.50 L1138.75 700.75 L1145.00 695.75 L1155.00 695.75 L1167.50 698.25 L1185.00 695.00 L1202.50 693.50 L1216.25 694.00 L1227.50 692.00 L1238.75 695.00 L1250.00 694.00 L1256.25 697.25 L1273.75 693.50 L1285.00 696.50 L1291.25 695.50 L1305.00 697.50 L1320.00 695.25 L1331.25 694.25 L1347.50 696.75 L1361.25 694.25 L1375.00 695.75 L1385.00 694.50 L1395.50 692.25 L1401.00 705.00 L1406.75 695.75 L1412.25 695.50 L1418.50 693.25 L1424.75 692.00 L1432.25 685.75 L1438.50 682.75 L1451.00 681.00 L1459.75 682.25 L1467.25 683.25 L1471.50 685.00 L1476.00 692.75" fill="none" stroke="rgba(60,40,160,0.22)" stroke-width="2.4" stroke-linejoin="round" transform="translate(0.4,0.9)"/>
<path d="M349.50 701.50 L356.25 689.50 L361.25 692.50 L367.00 697.00 L373.00 694.50 L378.75 697.00 L385.00 693.75 L390.50 692.75 L396.25 695.25 L402.00 700.00 L408.00 690.25 L413.25 692.00 L418.00 717.50 L423.00 699.50 L429.25 703.25 L435.00 697.00 L441.25 693.75 L447.00 694.50 L452.00 699.00 L457.00 708.25 L462.50 708.25 L468.00 702.75 L473.00 702.50 L478.75 699.50 L485.00 697.75 L490.50 698.25 L496.25 699.00 L502.50 695.75 L508.00 695.25 L513.75 698.75 L519.50 699.50 L525.00 697.75 L531.25 699.00 L536.25 700.00 L542.00 700.25 L547.50 698.75 L553.75 698.25 L559.50 700.75 L565.00 703.25 L570.00 698.25 L575.00 700.00 L580.00 700.75 L586.25 700.25 L592.50 696.50 L599.25 692.50 L605.50 695.25 L611.25 697.00 L617.00 694.50 L622.50 695.75 L628.75 695.75 L635.00 697.00 L640.50 697.00 L646.25 694.75 L652.50 695.25 L660.00 696.50 L668.75 697.00 L677.50 698.75 L685.50 699.50 L693.75 685.00 L701.25 663.75 L708.00 660.25 L723.75 662.50 L732.50 660.25 L748.75 659.00 L756.25 659.50 L758.75 717.00 L762.00 755.50 L765.50 750.75 L769.25 749.50 L773.75 749.75 L777.50 714.50 L781.75 683.25 L790.00 647.50 L797.50 654.50 L813.00 659.50 L821.25 658.50 L830.00 658.25 L837.00 656.75 L844.50 658.75 L847.50 707.00 L851.00 747.50 L855.50 747.50 L861.75 749.75 L865.00 719.50 L869.50 687.00 L878.00 655.00 L885.00 656.00 L900.00 662.50 L915.00 663.75 L923.75 658.75 L931.25 657.50 L934.50 724.50 L938.00 747.25 L943.75 743.75 L950.00 744.75 L953.00 717.00 L957.50 685.75 L966.25 650.25 L982.50 657.00 L1003.75 662.50 L1020.00 661.00 L1023.00 724.50 L1026.75 749.50 L1032.50 747.75 L1038.75 747.25 L1042.00 712.00 L1046.25 673.25 L1053.75 660.75 L1061.25 662.50 L1070.00 658.25 L1078.75 656.75 L1100.00 658.25 L1109.50 660.25 L1112.50 712.00 L1115.75 747.50 L1127.50 747.00 L1132.50 714.50 L1138.75 700.75 L1145.00 695.75 L1155.00 695.75 L1167.50 698.25 L1185.00 695.00 L1202.50 693.50 L1216.25 694.00 L1227.50 692.00 L1238.75 695.00 L1250.00 694.00 L1256.25 697.25 L1273.75 693.50 L1285.00 696.50 L1291.25 695.50 L1305.00 697.50 L1320.00 695.25 L1331.25 694.25 L1347.50 696.75 L1361.25 694.25 L1375.00 695.75 L1385.00 694.50 L1395.50 692.25 L1401.00 705.00 L1406.75 695.75 L1412.25 695.50 L1418.50 693.25 L1424.75 692.00 L1432.25 685.75 L1438.50 682.75 L1451.00 681.00 L1459.75 682.25 L1467.25 683.25 L1471.50 685.00 L1476.00 692.75" fill="none" stroke="#1a1a78" stroke-width="1.1" stroke-linejoin="round"/>
<rect x="352.75" y="622.75" width="16.5" height="12.25" fill="#fff" stroke="#d0d0d0" stroke-width="1"/>
<rect x="354.1" y="624.2" width="13.8" height="9.6" fill="#000080"/>
<text x="374.5" y="632.2" font-size="9.8" fill="#555">Pace</text>
<rect x="404.75" y="622.75" width="16.5" height="12.25" fill="#fff" stroke="#d0d0d0" stroke-width="1"/>
<text x="426.5" y="632.2" font-size="9.8" fill="#555">Moving average</text>
<rect x="512.75" y="622.75" width="16.5" height="12.25" fill="#fff" stroke="#d0d0d0" stroke-width="1"/>
<text x="534.5" y="632.2" font-size="9.8" fill="#555">Grade adjusted pace</text>
<rect x="645.75" y="622.75" width="16.5" height="12.25" fill="#fff" stroke="#d0d0d0" stroke-width="1"/>
<text x="667.5" y="632.2" font-size="9.8" fill="#555">Aerobic Efficiency</text>
<g font-size="10" fill="#555" text-anchor="end">
<text x="345" y="649.70">04:00</text>
<text x="345" y="680.90">05:00</text>
<text x="345" y="700.90">06:00</text>
<text x="345" y="726.65">08:00</text>
<text x="345" y="741.90">10:00</text>
</g><g font-size="10" fill="#555" text-anchor="middle">
<text x="447.50" y="802.7">1 km</text>
<text x="550.00" y="802.7">2 km</text>
<text x="652.50" y="802.7">3 km</text>
<text x="755.00" y="802.7">4 km</text>
<text x="857.50" y="802.7">5 km</text>
<text x="960.00" y="802.7">6 km</text>
<text x="1062.50" y="802.7">7 km</text>
<text x="1165.00" y="802.7">8 km</text>
<text x="1267.50" y="802.7">9 km</text>
<text x="1370.00" y="802.7">10 km</text>
<text x="1472.50" y="802.7">11 km</text>
</g></svg></div>
<div class="abs" style="left:1232px;top:760px;font-size:24.7px;line-height:36px;white-space:nowrap;color:#fff;font-family:&quot;Liberation Sans&quot;,&quot;Noto Sans CJK SC&quot;,sans-serif;text-shadow:1px 1px 1px #444,-0.5px -0.5px 0.5px #666,1px -0.5px 0.5px #777,-0.5px 1px 0.5px #777">掘金技术社区<span style="margin-left:6.5px;font-size:21.5px">@</span><span style="margin-left:8.5px;font-size:24px;font-family:&quot;DejaVu Sans&quot;,sans-serif">spool</span></div>
</body></html>
